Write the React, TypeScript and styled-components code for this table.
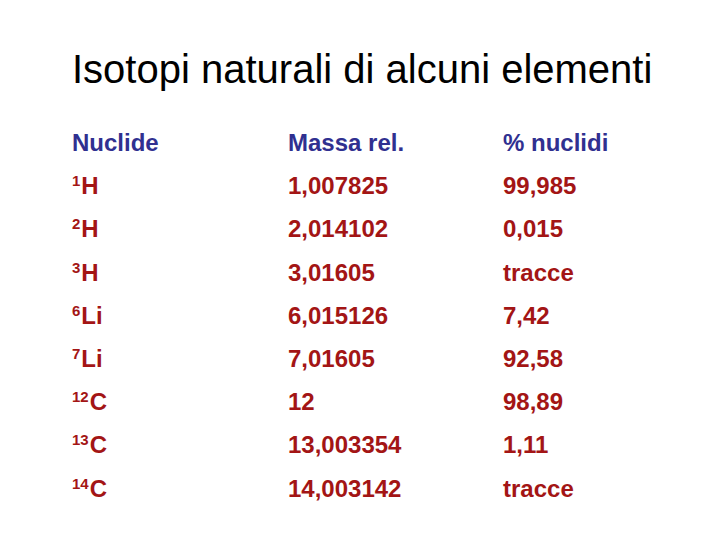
import React from "react";
import styled, { createGlobalStyle } from "styled-components";

const Global = createGlobalStyle`
  html, body { margin: 0; padding: 0; background: #ffffff; }
  body { font-family: "Liberation Sans", Arial, sans-serif; }
`;

const Slide = styled.div`
  width: 720px;
  height: 540px;
  box-sizing: border-box;
  padding: 49px 0 0 72px;
  background: #ffffff;
  overflow: hidden;
`;

const Title = styled.h1`
  margin: 0;
  font-family: "Liberation Sans", Arial, sans-serif;
  font-weight: 400;
  font-size: 40px;
  line-height: 40px;
  color: #000000;
  white-space: nowrap;
`;

const Table = styled.div`
  margin-top: 32px;
  display: grid;
  grid-template-columns: 216px 215px auto;
  grid-auto-rows: 43.2px;
`;

const Cell = styled.div<{ $head?: boolean }>`
  font-family: "Liberation Sans", Arial, sans-serif;
  font-weight: 700;
  font-size: 24px;
  line-height: 43.2px;
  color: ${(p) => (p.$head ? "#303090" : "#a31515")};
  white-space: nowrap;
`;

const Sup = styled.sup`
  font-size: 15px;
  line-height: 0;
  vertical-align: 8px;
  margin-right: 1px;
`;

const rows: [string, string, string, string][] = [
  ["1", "H", "1,007825", "99,985"],
  ["2", "H", "2,014102", "0,015"],
  ["3", "H", "3,01605", "tracce"],
  ["6", "Li", "6,015126", "7,42"],
  ["7", "Li", "7,01605", "92,58"],
  ["12", "C", "12", "98,89"],
  ["13", "C", "13,003354", "1,11"],
  ["14", "C", "14,003142", "tracce"],
];

export default function App() {
  return (
    <>
      <Global />
      <Slide>
        <Title>Isotopi naturali di alcuni elementi</Title>
        <Table>
          <Cell $head>Nuclide</Cell>
          <Cell $head>Massa rel.</Cell>
          <Cell $head>% nuclidi</Cell>
          {rows.map(([m, el, mass, pct]) => (
            <React.Fragment key={m + el}>
              <Cell>
                <Sup>{m}</Sup>
                {el}
              </Cell>
              <Cell>{mass}</Cell>
              <Cell>{pct}</Cell>
            </React.Fragment>
          ))}
        </Table>
      </Slide>
    </>
  );
}
